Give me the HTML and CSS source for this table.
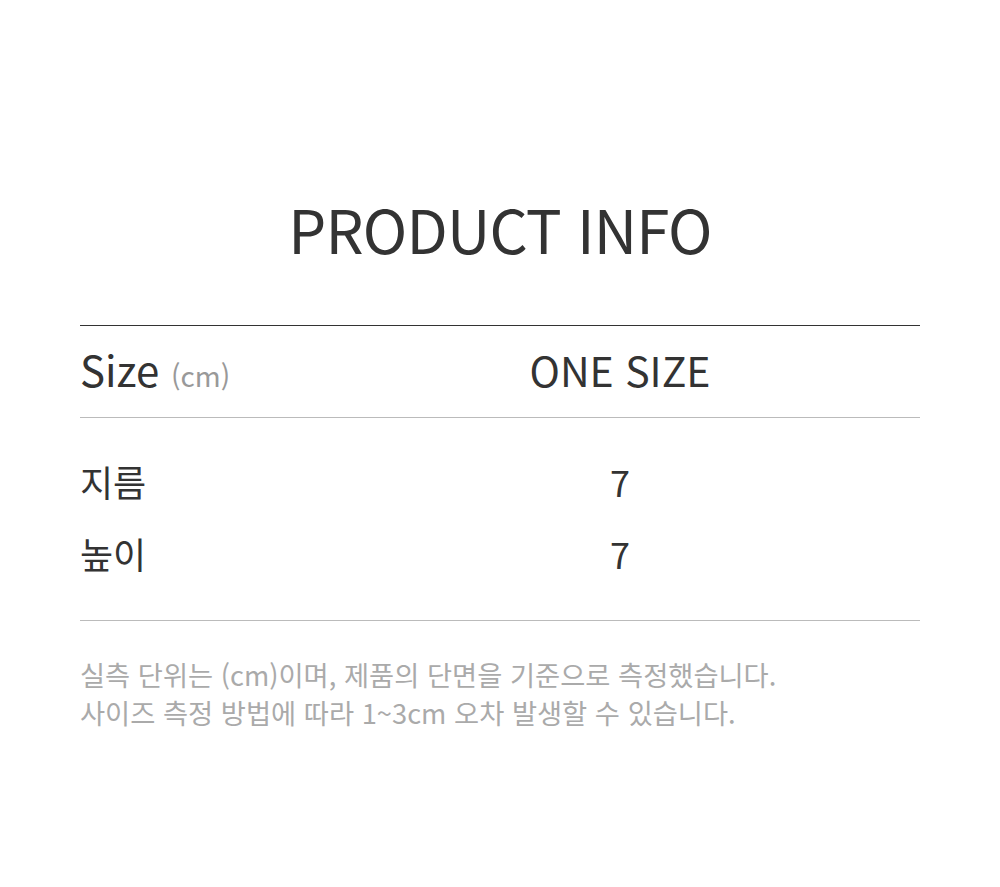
FILE: index.html
```html
<!DOCTYPE html>
<html lang="ko">
<head>
<meta charset="utf-8">
<link rel="stylesheet" href="styles.css">
</head>
<body>
<div class="page">
  <h1 class="title">PRODUCT INFO</h1>
  <div class="table">
    <div class="row head">
      <div class="label">Size <span class="unit">(cm)</span></div>
      <div class="value">ONE SIZE</div>
    </div>
    <div class="body">
      <div class="row item">
        <div class="label">지름</div>
        <div class="value">7</div>
      </div>
      <div class="row item">
        <div class="label">높이</div>
        <div class="value">7</div>
      </div>
    </div>
  </div>
  <p class="note">실측 단위는 (cm)이며, 제품의 단면을 기준으로 측정했습니다.<br>사이즈 측정 방법에 따라 1~3cm 오차 발생할 수 있습니다.</p>
</div>
</body>
</html>
```
FILE: styles.css
```css
html, body {
  margin: 0;
  padding: 0;
  background: #fff;
}
body {
  font-family: "Noto Sans CJK KR", "Noto Sans", sans-serif;
  color: #333;
}
.page {
  width: 840px;
  margin: 0 auto;
  padding-top: 185px;
}
.title {
  margin: 0;
  font-size: 60px;
  letter-spacing: -0.8px;
  font-weight: 400;
  text-align: center;
  line-height: 86px;
  color: #333;
}
.table {
  margin-top: 54px;
  border-top: 1px solid #333;
  border-bottom: 1px solid #bbb;
}
.row {
  display: grid;
  grid-template-columns: 240px 600px;
  align-items: center;
}
.head {
  box-sizing: border-box;
  height: 92px;
  padding-bottom: 6px;
  border-bottom: 1px solid #bbb;
  font-size: 42px;
}
.head .value {
  font-size: 41px;
}
.unit {
  font-size: 28px;
  color: #999;
}
.value {
  text-align: center;
}
.body {
  padding: 27px 0 31px;
}
.item {
  height: 72px;
  font-size: 36px;
}
.note {
  margin: 34px 0 0;
  font-size: 27.3px;
  line-height: 38px;
  color: #aaa;
}
```
